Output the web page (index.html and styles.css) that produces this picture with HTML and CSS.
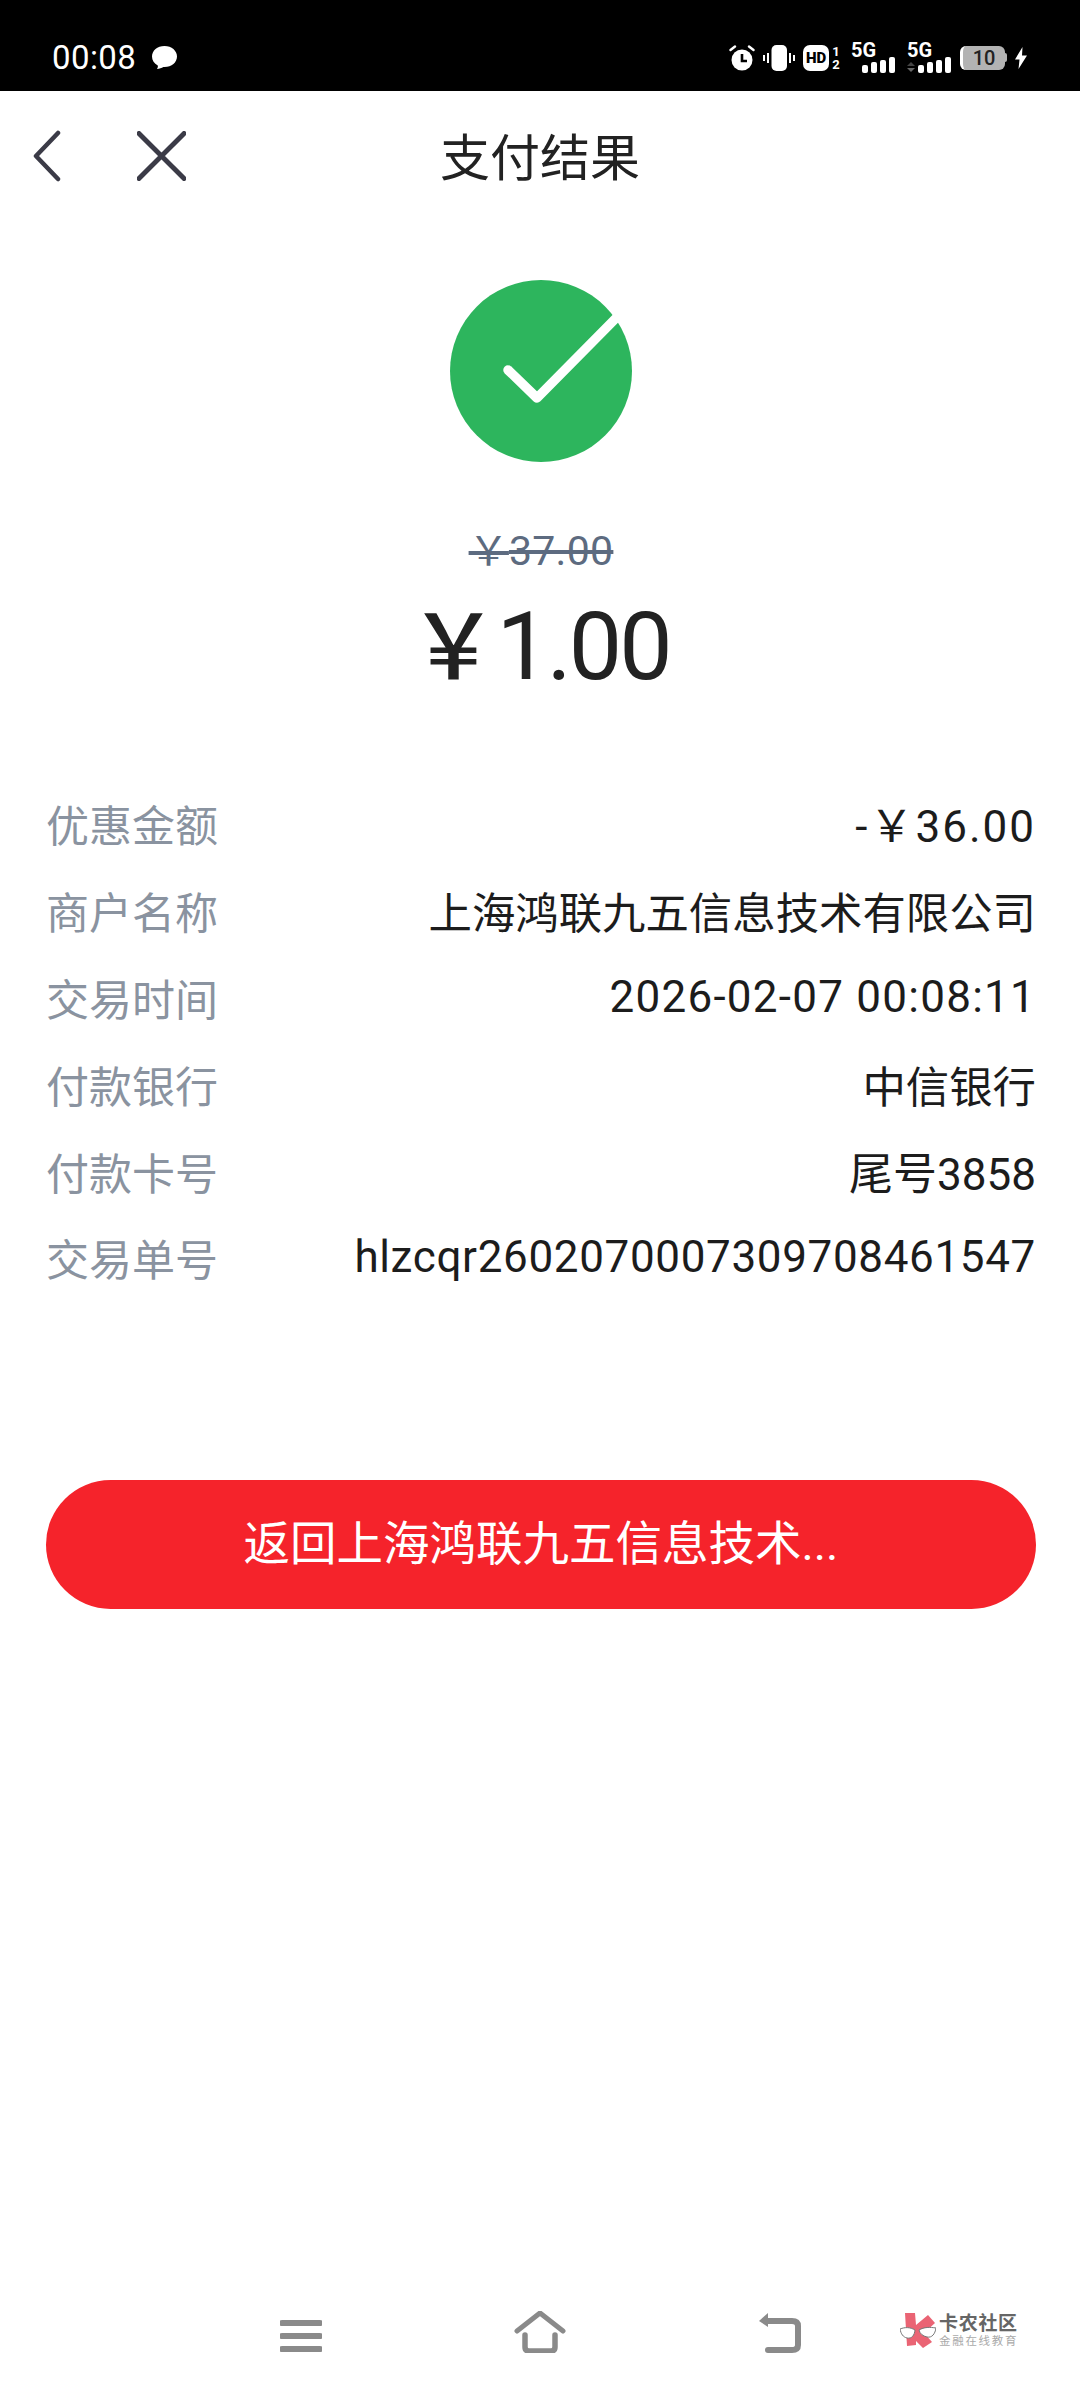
FILE: index.html
```html
<!DOCTYPE html>
<html lang="zh-CN">
<head>
<meta charset="utf-8">
<title>支付结果</title>
<link rel="stylesheet" href="styles.css">
</head>
<body>
<div class="page">
  <header class="status">
    <div class="status-left">
      <span class="clock">00:08</span>
      <svg class="bubble" viewBox="0 0 28 26"><path d="M14 1C6.500 1 1 5.800 1 12c0 4 2.300 7.300 6 9.200.4 1.200-.1 2.700-.9 3.800 2.600-.1 5-1 6.700-2.100H14c7.500 0 13-5 13-11S21.500 1 14 1z" fill="#fff"/></svg>
    </div>
    <div class="status-right">
      <svg class="ico-alarm" viewBox="0 0 26 26"><circle cx="13" cy="15" r="10.500" fill="#fff"/><path d="M13 9v7h5" fill="none" stroke="#000" stroke-width="2.600"/><path d="M1.500 5L6 1.500M24.500 5L20 1.500" stroke="#fff" stroke-width="2.400" stroke-linecap="round"/></svg>
      <svg class="ico-vib" viewBox="0 0 32 26"><rect x="8.500" y="0" width="15.500" height="26" rx="5" fill="#fff"/><path d="M5 8v10M1 10v6M27 8v10M31 10v6" stroke="#fff" stroke-width="2" fill="none"/></svg>
      <div class="hd"><span class="hd-box">HD</span><span class="hd-nums"><span>1</span><span>2</span></span></div>
      <div class="sig"><span class="sig-t">5G</span><span class="bars"><i class="b1"></i><i class="b2"></i><i class="b3"></i><i class="b4"></i></span></div>
      <div class="sig sig-last"><span class="sig-t">5G</span><svg class="updown" viewBox="0 0 8 10"><path d="M4 0l4 4H0z" fill="#444"/><path d="M4 10L0 6h8z" fill="#666"/></svg><span class="bars"><i class="b1"></i><i class="b2"></i><i class="b3"></i><i class="b4"></i></span></div>
      <div class="batt"><span class="batt-body">10</span><span class="batt-tip"></span></div>
      <svg class="ico-bolt" viewBox="0 0 12 22"><path d="M7.500 0L0 12.500h4.500L3.500 22 12 8.500H7z" fill="#fff"/></svg>
    </div>
  </header>

  <nav class="topbar">
    <svg class="ico-back" viewBox="0 0 30 52"><path d="M26 3L4 26l22 23" fill="none" stroke="#3b3b47" stroke-width="4.500" stroke-linecap="round" stroke-linejoin="round"/></svg>
    <svg class="ico-close" viewBox="0 0 50 50"><path d="M2 2l46 46M48 2L2 48" fill="none" stroke="#3b3b47" stroke-width="5" stroke-linecap="round"/></svg>
    <h1 class="title">支付结果</h1>
  </nav>

  <main class="content">
    <svg class="ok" viewBox="0 0 182 182">
      <circle cx="91" cy="91" r="91" fill="#2db55d"/>
      <path d="M58 90l29 28 88-89" fill="none" stroke="#fff" stroke-width="9.500" stroke-linejoin="round"/>
      <circle cx="58" cy="90" r="4.750" fill="#fff"/>
    </svg>
    <div class="old-price"><span class="old-yen">￥</span>37.00</div>
    <div class="price"><span class="yen">￥</span>1.00</div>

    <dl class="rows">
      <div class="row"><dt>优惠金额</dt><dd class="amt">-￥36.00</dd></div>
      <div class="row"><dt>商户名称</dt><dd class="cjk">上海鸿联九五信息技术有限公司</dd></div>
      <div class="row"><dt>交易时间</dt><dd class="time">2026-02-07 00:08:11</dd></div>
      <div class="row"><dt>付款银行</dt><dd class="cjk">中信银行</dd></div>
      <div class="row"><dt>付款卡号</dt><dd>尾号3858</dd></div>
      <div class="row"><dt>交易单号</dt><dd class="order">hlzcqr2602070007309708461547</dd></div>
    </dl>

    <button class="cta">返回上海鸿联九五信息技术...</button>
  </main>

  <footer class="navbar">
    <svg class="ico-menu" viewBox="0 0 42 34"><path d="M2 4h38M2 17h38M2 30h38" stroke="#8a8a8a" stroke-width="6" stroke-linecap="round"/></svg>
    <svg class="ico-home" viewBox="0 0 52 42"><path d="M3 20L26 2l23 18" fill="none" stroke="#8a8a8a" stroke-width="5" stroke-linecap="round" stroke-linejoin="round"/><path d="M11 24v12q0 4 4 4h22q4 0 4-4V24" fill="none" stroke="#8a8a8a" stroke-width="5.500" stroke-linecap="round"/></svg>
    <svg class="ico-ret" viewBox="0 0 44 40"><path d="M8 8h26q6 0 6 5v19q0 5-6 5H10" fill="none" stroke="#8a8a8a" stroke-width="6" stroke-linecap="round"/><path d="M10 0L1 8l9 6z" fill="#8a8a8a"/></svg>
  </footer>

  <div class="mark">
    <svg class="mark-logo" viewBox="0 0 36 36"><path d="M5 0h10l1 12L28 2l7 8-11 10 8 9-9 6-7-7v4l-9 1z" fill="#ea6474"/><path d="M0 16c5-2 10-2 15 1-.5 5-3 9-8 8-4-1-6-4-7-9zM19 17c5-3 11-3 17-2-1 6-4 10-9 9-4-1-7-3-8-7z" fill="#fff" stroke="#777" stroke-width="1"/></svg>
    <div class="mark-text"><span class="mark-a">卡农社区</span><span class="mark-b">金融在线教育</span></div>
  </div>
</div>
</body>
</html>
```

FILE: styles.css
```css
* { box-sizing: border-box; }
html, body { margin: 0; padding: 0; background: #fff; }
body { font-family: Roboto, "Noto Sans CJK SC", sans-serif; }
.page { position: relative; width: 1080px; height: 2400px; display: flex; flex-direction: column; overflow: hidden; }

.status { height: 91px; background: #000; color: #fff; display: flex; justify-content: space-between; align-items: center; padding: 24px 0 0 52px; flex: none; }
.status-left { display: flex; align-items: center; gap: 15px; }
.clock { font-size: 33px; line-height: 40px; letter-spacing: .4px; }
.bubble { width: 27px; height: 25px; }
.status-right { display: flex; align-items: center; padding-right: 53px; }
.ico-alarm { width: 26px; height: 26px; margin-right: 8px; }
.ico-vib { width: 32px; height: 26px; margin-right: 8px; }
.hd { display: flex; align-items: center; margin-right: 11px; }
.hd-box { width: 26px; height: 26px; border-radius: 7px; background: #fff; color: #000; font: 900 15px/26px Roboto, sans-serif; text-align: center; }
.hd-nums { display: flex; flex-direction: column; font: 700 13px/13px Roboto, sans-serif; width: 8px; margin-left: 3px; text-align: center; }
.sig { position: relative; width: 44px; height: 30px; margin-right: 12px; }
.sig-last { margin-right: 9px; }
.sig-t { position: absolute; left: 0; top: -3px; font: 700 20px/20px Roboto, sans-serif; }
.updown { position: absolute; left: 0; bottom: 1px; width: 8px; height: 10px; }
.bars { position: absolute; right: 0; bottom: 0; display: flex; align-items: flex-end; gap: 3px; }
.bars i { width: 6px; background: #fff; border-radius: 2px; display: block; }
.b1 { height: 8px; } .b2 { height: 11px; } .b3 { height: 13px; } .b4 { height: 16px; }
.batt { display: flex; align-items: center; margin-right: 8px; }
.batt-body { width: 45px; height: 24px; border-radius: 6px; background: #b3b3b3; border-left: 3px solid #fff; color: #222; font: 500 20px/24px Roboto, sans-serif; text-align: center; }
.batt-tip { width: 2px; height: 9px; background: #b3b3b3; border-radius: 0 2px 2px 0; }
.ico-bolt { width: 12px; height: 22px; }

.topbar { position: relative; height: 135px; flex: none; display: flex; align-items: center; padding: 0 0 6px 32px; }
.ico-back { width: 30px; height: 52px; margin-right: 75px; }
.ico-close { width: 49px; height: 50px; }
.title { position: absolute; left: 0; right: 0; top: 36px; margin: 0; text-align: center; font-size: 50px; line-height: 64px; font-weight: 400; color: #222; }

.content { display: flex; flex-direction: column; align-items: center; padding: 54px 44px 0 46px; }
.ok { width: 182px; height: 182px; display: block; flex: none; }
.old-price { margin-top: 64px; font-size: 41px; line-height: 50px; color: #5d6b80; text-decoration: line-through; text-decoration-thickness: 4px; letter-spacing: .3px; }
.old-yen { font-size: 40px; }
.price { margin-top: 14px; font-size: 95px; line-height: 112px; font-weight: 400; letter-spacing: -3px; color: #222; }
.yen { font-size: 90px; font-weight: 500; letter-spacing: 0; margin: 0 -2px 0 -4px; }

.rows { width: 100%; margin: 75px 0 0; padding: 0; }
.row { height: 86.800px; display: flex; justify-content: space-between; align-items: center; font-size: 44px; }
.row dt { color: #8a93a0; font-size: 43px; }
.row dd { margin: 0; color: #1c1c1c; }
.row .cjk { font-size: 43.400px; }
.row .amt { letter-spacing: 2px; }
.row .time { letter-spacing: 1.250px; }
.row .order { letter-spacing: .65px; }

.cta { width: 100%; height: 129px; margin-top: 179px; border: 0; border-radius: 65px; background: #f5232b; color: #fff; font: 400 46.500px/1 Roboto, "Noto Sans CJK SC", sans-serif; }

.navbar { margin-top: auto; height: 100px; padding-bottom: 47px; display: flex; align-items: flex-end; flex: none; }
.ico-menu { width: 42px; height: 34px; margin-left: 280px; }
.ico-home { width: 52px; height: 42px; margin-left: 192px; }
.ico-ret { width: 44px; height: 40px; margin-left: 192px; }

.mark { position: absolute; left: 900px; top: 2313px; display: flex; align-items: center; gap: 3px; }
.mark-logo { width: 36px; height: 36px; }
.mark-text { display: flex; flex-direction: column; }
.mark-a { font-size: 19px; line-height: 21px; font-weight: 700; color: #666; letter-spacing: .7px; white-space: nowrap; }
.mark-b { font-size: 11.500px; line-height: 15px; color: #aaa; letter-spacing: 1.700px; white-space: nowrap; }
```
